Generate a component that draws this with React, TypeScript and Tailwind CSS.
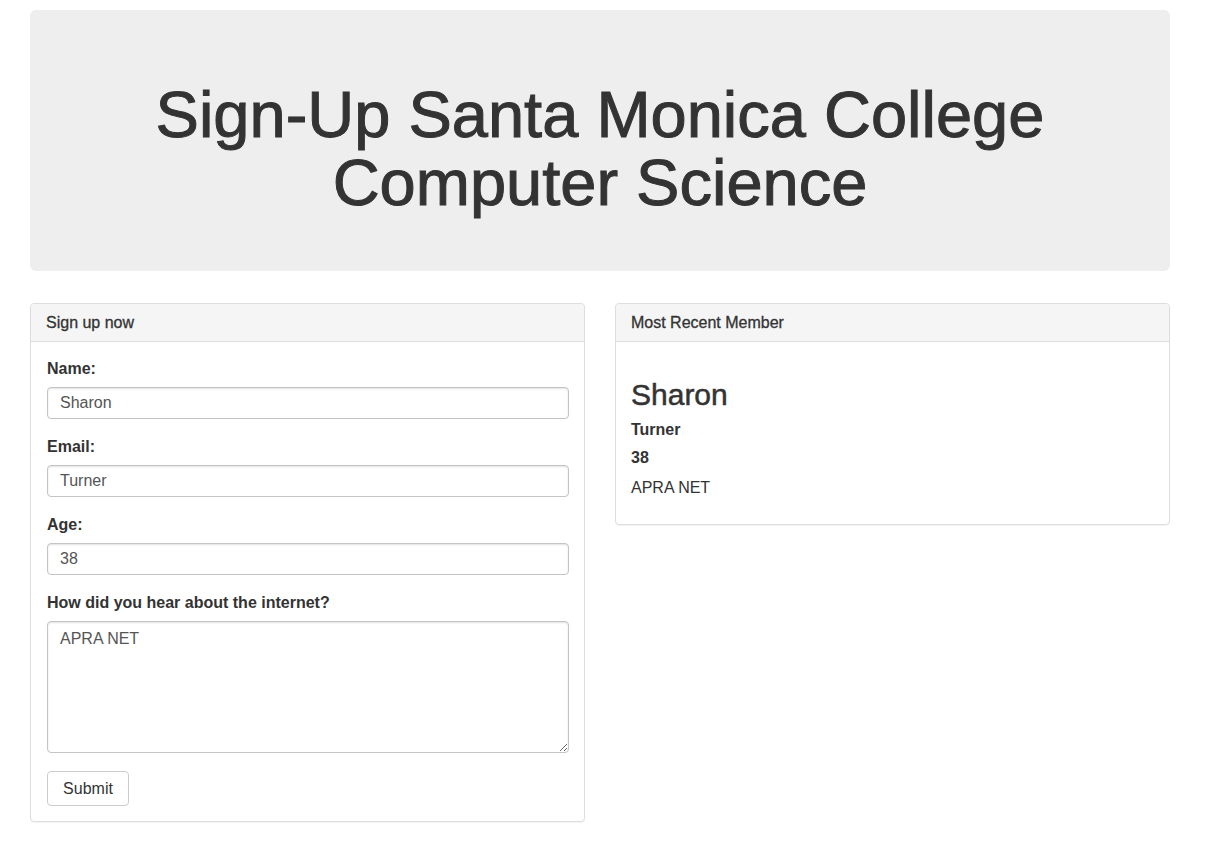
const fieldClass =
    "block w-full h-[32px] px-[12px] text-[16px] text-[#555] bg-white border border-[#c4c4c4] rounded-[4px] shadow-[inset_0_1px_2px_rgba(0,0,0,0.12)] outline-none";

function Field({ label, value }: { label: string; value: string }) {
    return (
        <div className="mb-[16px]">
            <label className="block text-[16px] leading-[24px] font-bold mb-[6px]">{label}</label>
            <input className={fieldClass} defaultValue={value} />
        </div>
    );
}

function PanelHeading({ title }: { title: string }) {
    return (
        <div className="h-[38px] px-[15px] flex items-center bg-[#f5f5f5] border-b border-[#ddd] rounded-t-[4px]">
            <h3 className="text-[16px] leading-[18px] [-webkit-text-stroke:0.3px_#333]">{title}</h3>
        </div>
    );
}

export default function App() {
    return (
        <div
            className="min-h-screen bg-white text-[#333] pt-[10px]"
            style={{ fontFamily: '"Liberation Sans", Arial, sans-serif' }}
        >
            <div className="w-[1140px] ml-[30px]">
                <div className="bg-[#eee] rounded-[6px] h-[261px] pt-[71px] text-center">
                    <h1 className="text-[65px] leading-[68px] font-normal [-webkit-text-stroke:1px_#333]">
                        Sign-Up Santa Monica College
                        <br />
                        Computer Science
                    </h1>
                </div>

                <div className="grid grid-cols-2 gap-[30px] mt-[32px] items-start">
                    <div className="border border-[#ddd] rounded-[4px] shadow-[0_1px_1px_rgba(0,0,0,0.05)]">
                        <PanelHeading title="Sign up now" />
                        <div className="pt-[15px] pb-[15px] pl-[16px] pr-[15px]">
                            <Field label="Name:" value="Sharon" />
                            <Field label="Email:" value="Turner" />
                            <Field label="Age:" value="38" />
                            <div className="mb-[18px]">
                                <label className="block text-[16px] leading-[24px] font-bold mb-[6px]">
                                    How did you hear about the internet?
                                </label>
                                <textarea
                                    className="block w-full h-[132px] px-[12px] py-[6px] text-[16px] leading-[22px] text-[#555] bg-white border border-[#c4c4c4] rounded-[4px] shadow-[inset_0_1px_2px_rgba(0,0,0,0.12)] outline-none"
                                    defaultValue="APRA NET"
                                />
                            </div>
                            <button className="h-[35px] w-[82px] text-[16px] text-[#333] bg-white border border-[#ccc] rounded-[4px]">
                                Submit
                            </button>
                        </div>
                    </div>

                    <div className="border border-[#ddd] rounded-[4px] shadow-[0_1px_1px_rgba(0,0,0,0.05)]">
                        <PanelHeading title="Most Recent Member" />
                        <div className="p-[15px]">
                            <h3 className="text-[30px] leading-[30px] font-normal mt-[23px] mb-[11px] [-webkit-text-stroke:0.5px_#333]">
                                Sharon
                            </h3>
                            <h5 className="text-[16px] leading-[18px] font-bold mb-[10px]">Turner</h5>
                            <h5 className="text-[16px] leading-[18px] font-bold mb-[10px]">38</h5>
                            <p className="text-[16px] leading-[22px] mb-[10px]">APRA NET</p>
                        </div>
                    </div>
                </div>
            </div>
        </div>
    );
}
